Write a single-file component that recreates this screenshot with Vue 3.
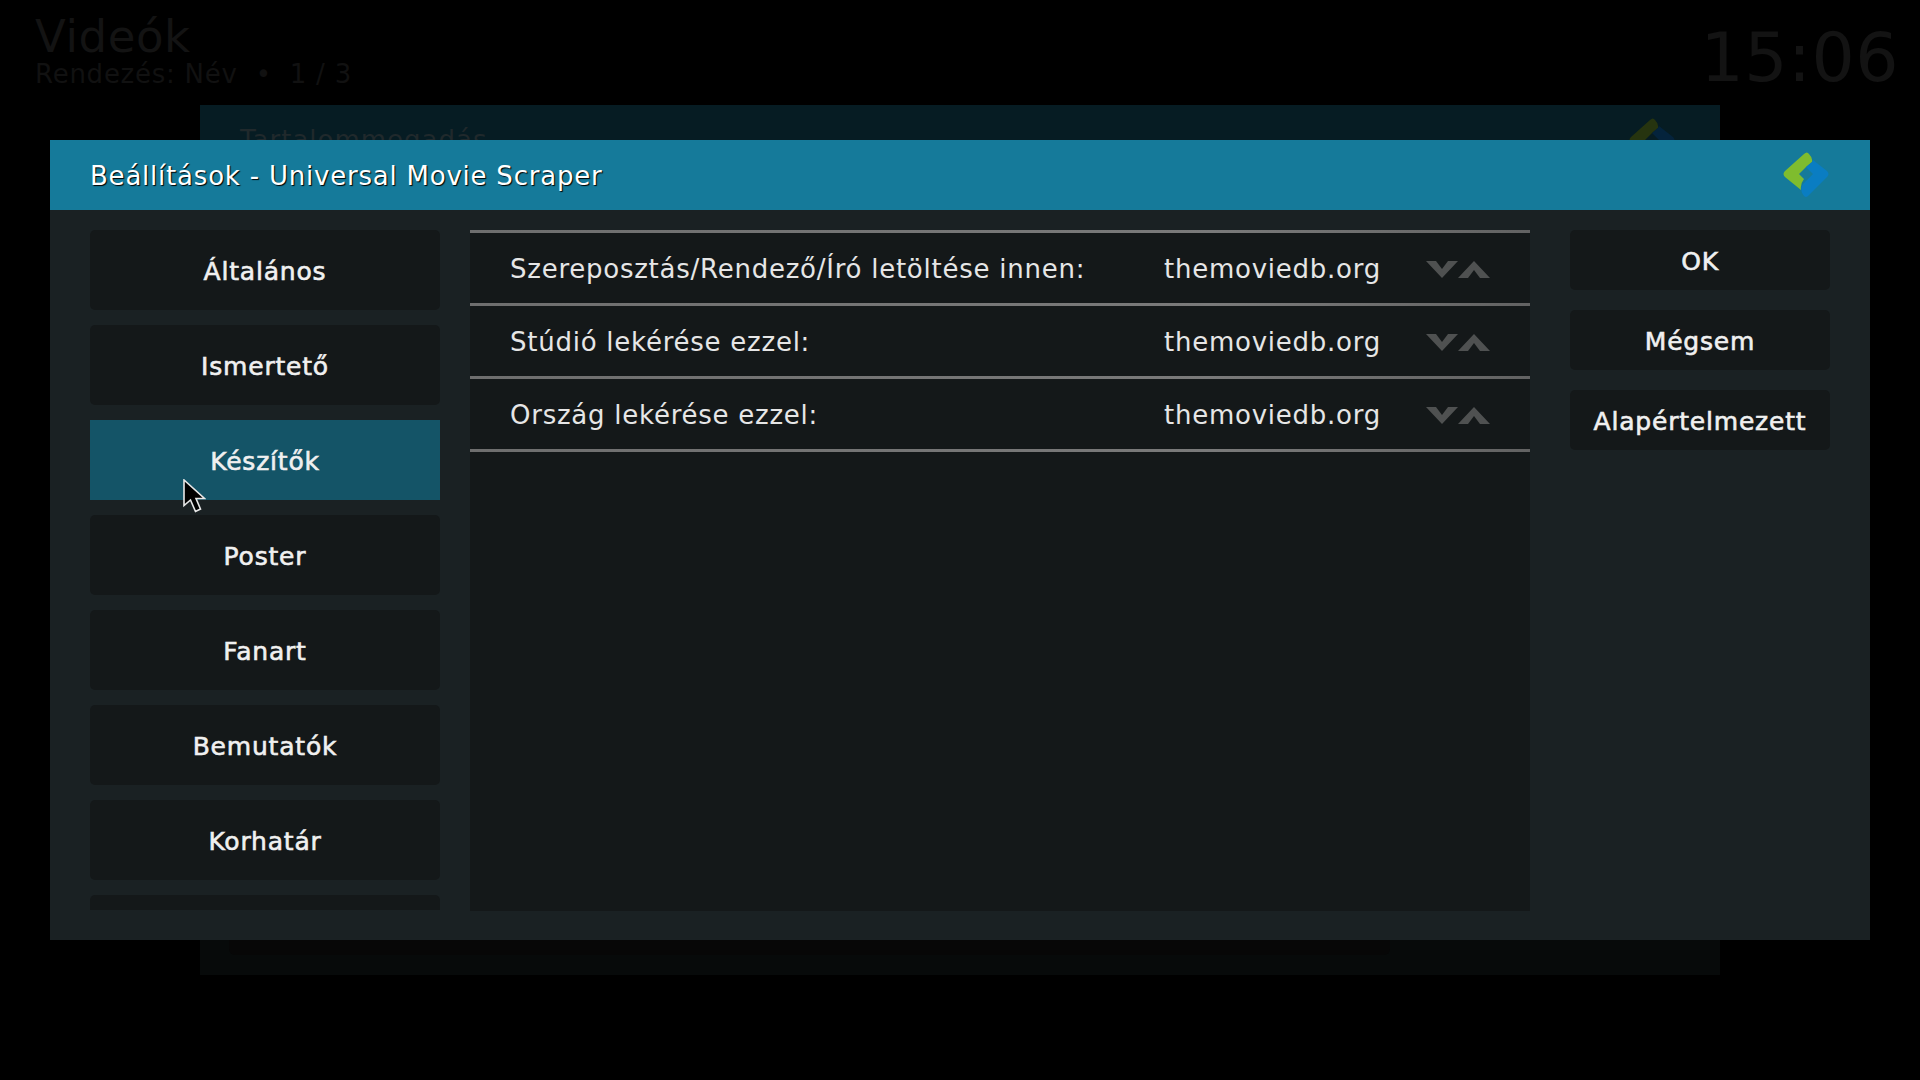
<template>
  <div class="screen">
    <!-- dimmed window behind the dialog -->
    <div class="backdrop">
      <header class="top-bar">
        <div class="top-left">
          <div class="page-title">Videók</div>
          <div class="page-sub">Rendezés: Név &nbsp;•&nbsp; 1 / 3</div>
        </div>
        <div class="clock">15:06</div>
      </header>
      <div class="back-panel">
        <div class="back-head">
          <span class="back-title">Tartalommegadás</span>
          <svg class="logo" viewBox="0 0 46 46" width="46" height="46">
            <path fill="#26340f" :d="greenPath" />
            <path fill="#04233c" :d="bluePath" />
          </svg>
        </div>
        <div class="back-body">
          <div class="back-inner"></div>
        </div>
      </div>
    </div>

    <div class="dialog">
      <div class="dialog-head">
        <span class="dialog-title">Beállítások - Universal Movie Scraper</span>
        <svg class="logo" viewBox="0 0 46 46" width="46" height="46">
          <path fill="#7fbc2e" :d="greenPath" />
          <path fill="#0a7dc2" :d="bluePath" />
        </svg>
      </div>
      <div class="dialog-body">
        <nav class="categories">
          <div
            v-for="(cat, i) in categories"
            :key="i"
            class="cat-btn"
            :class="{ active: cat === activeCategory }"
          >{{ cat }}</div>
        </nav>
        <section class="settings">
          <div v-for="row in rows" :key="row" class="setting-row">
            <span class="setting-label">{{ row }}</span>
            <span class="setting-value">themoviedb.org</span>
            <svg class="spinner" viewBox="0 0 64 17" width="64" height="17">
              <path fill="#4f5151" d="M0 0H10L16 8L22 0H32L16 17Z" />
              <path fill="#4f5151" d="M32 17H42L48 9L54 17H64L48 0Z" />
            </svg>
          </div>
        </section>
        <aside class="actions">
          <div v-for="action in actions" :key="action" class="action-btn">{{ action }}</div>
        </aside>
      </div>
    </div>

    <svg class="cursor" viewBox="0 0 23 34" width="23" height="34">
      <path fill="#000" stroke="#e8e8e8" stroke-width="1.6" d="M1 1V26.5L7.5 21L12.5 32.5L17.5 30L13 19.5H21.5Z" />
    </svg>
  </div>
</template>

<script setup>
// last entry is only a sliver above the list's clip edge, no label visible
const categories = ['Általános', 'Ismertető', 'Készítők', 'Poster', 'Fanart', 'Bemutatók', 'Korhatár', '']
const activeCategory = 'Készítők'
const rows = [
  'Szereposztás/Rendező/Író letöltése innen:',
  'Stúdió lekérése ezzel:',
  'Ország lekérése ezzel:'
]
const actions = ['OK', 'Mégsem', 'Alapértelmezett']

const greenPath = 'M21 2Q24 -1 26 2Q30 6 29 10L23 15L16 22L21 27Q17 32 18 38L2 25Q-1 22 2 19Z'
const bluePath = 'M30 8L44 19Q47 22 44 25L25 44Q23 46 21 44Q16 38 20 32L23 29L30 22L23 15L29 10Z'
</script>

<style scoped>
.screen {
  position: relative;
  width: 1920px;
  height: 1080px;
  overflow: hidden;
  background: #000;
  font-family: "DejaVu Sans", sans-serif;
}

/* Backdrop */
.backdrop {
  display: flex;
  flex-direction: column;
  height: 100%;
}

.top-bar {
  display: flex;
  justify-content: space-between;
  height: 105px;
  padding: 0 21px 0 35px;
  box-sizing: border-box;
}

.page-title {
  margin-top: 11px;
  font-size: 45px;
  line-height: 52px;
  letter-spacing: 0.6px;
  color: #131313;
}

.page-sub {
  margin-top: -4px;
  font-size: 26px;
  line-height: 30px;
  letter-spacing: 0.75px;
  color: #111;
}

.clock {
  margin-top: 18px;
  font-size: 68px;
  line-height: 80px;
  letter-spacing: 0.5px;
  color: #131313;
}

.back-panel {
  display: flex;
  flex-direction: column;
  width: 1520px;
  height: 870px;
  margin-left: 200px;
}

.back-head {
  display: flex;
  justify-content: space-between;
  height: 70px;
  padding: 13px 45px 0 40px;
  box-sizing: border-box;
  background: #061c23;
}

.back-title {
  margin-top: 7px;
  font-size: 26px;
  line-height: 30px;
  letter-spacing: 1px;
  color: #20292c;
}

.back-body {
  flex: 1;
  padding-left: 29px;
  background: #070a0a;
}

.back-inner {
  width: 1161px;
  height: 780px;
  border-radius: 6px;
  background: #070707;
}

/* Dialog */
.dialog {
  position: absolute;
  left: 50px;
  top: 140px;
  display: flex;
  flex-direction: column;
  width: 1820px;
  height: 800px;
  background: #1a2123;
}

.dialog-head {
  display: flex;
  align-items: center;
  justify-content: space-between;
  flex: none;
  height: 70px;
  padding: 0 41px 0 40px;
  box-sizing: border-box;
  background: #157a9a;
}

.dialog-title {
  padding-top: 1px;
  font-size: 26px;
  letter-spacing: 0.78px;
  color: #fff;
  text-shadow: 1px 1px 1px #000;
}

.dialog-body {
  display: flex;
  gap: 30px;
  padding: 20px 40px 0;
}

.categories {
  display: flex;
  flex-direction: column;
  flex: none;
  gap: 15px;
  width: 350px;
  height: 680px;
  overflow: hidden;
}

.cat-btn {
  display: flex;
  align-items: center;
  justify-content: center;
  flex: none;
  height: 80px;
  padding-top: 2px;
  border-radius: 5px;
  box-sizing: border-box;
  background: #141819;
  font-size: 25px;
  letter-spacing: 0.8px;
  color: #f0f0f0;
  -webkit-text-stroke: 0.6px #f0f0f0;
}

.cat-btn.active {
  border-radius: 0;
  background: #145467;
}

.settings {
  flex: none;
  width: 1060px;
  height: 681px;
  border-top: 3px solid;
  border-image: linear-gradient(90deg, #6e6e6e, #7a7a7a 70%, #626262) 1;
  box-sizing: border-box;
  background: #141819;
}

.setting-row {
  display: flex;
  align-items: center;
  height: 73px;
  padding: 2px 40px 0;
  border-bottom: 3px solid;
  border-image: linear-gradient(90deg, #6e6e6e, #7a7a7a 70%, #626262) 1;
  box-sizing: border-box;
  font-size: 26px;
  letter-spacing: 0.75px;
  color: #e6e6e6;
}

.setting-label {
  flex: 1;
}

.setting-value {
  margin-right: 45px;
}

.spinner {
  margin-top: 1px;
}

.actions {
  display: flex;
  flex-direction: column;
  flex: none;
  gap: 20px;
  width: 260px;
  margin-left: 10px;
}

.action-btn {
  display: flex;
  align-items: center;
  justify-content: center;
  height: 60px;
  padding-top: 2px;
  border-radius: 5px;
  box-sizing: border-box;
  background: #141819;
  font-size: 25px;
  letter-spacing: 0.8px;
  color: #f0f0f0;
  -webkit-text-stroke: 0.6px #f0f0f0;
}

.cursor {
  position: absolute;
  left: 183px;
  top: 479px;
}
</style>
